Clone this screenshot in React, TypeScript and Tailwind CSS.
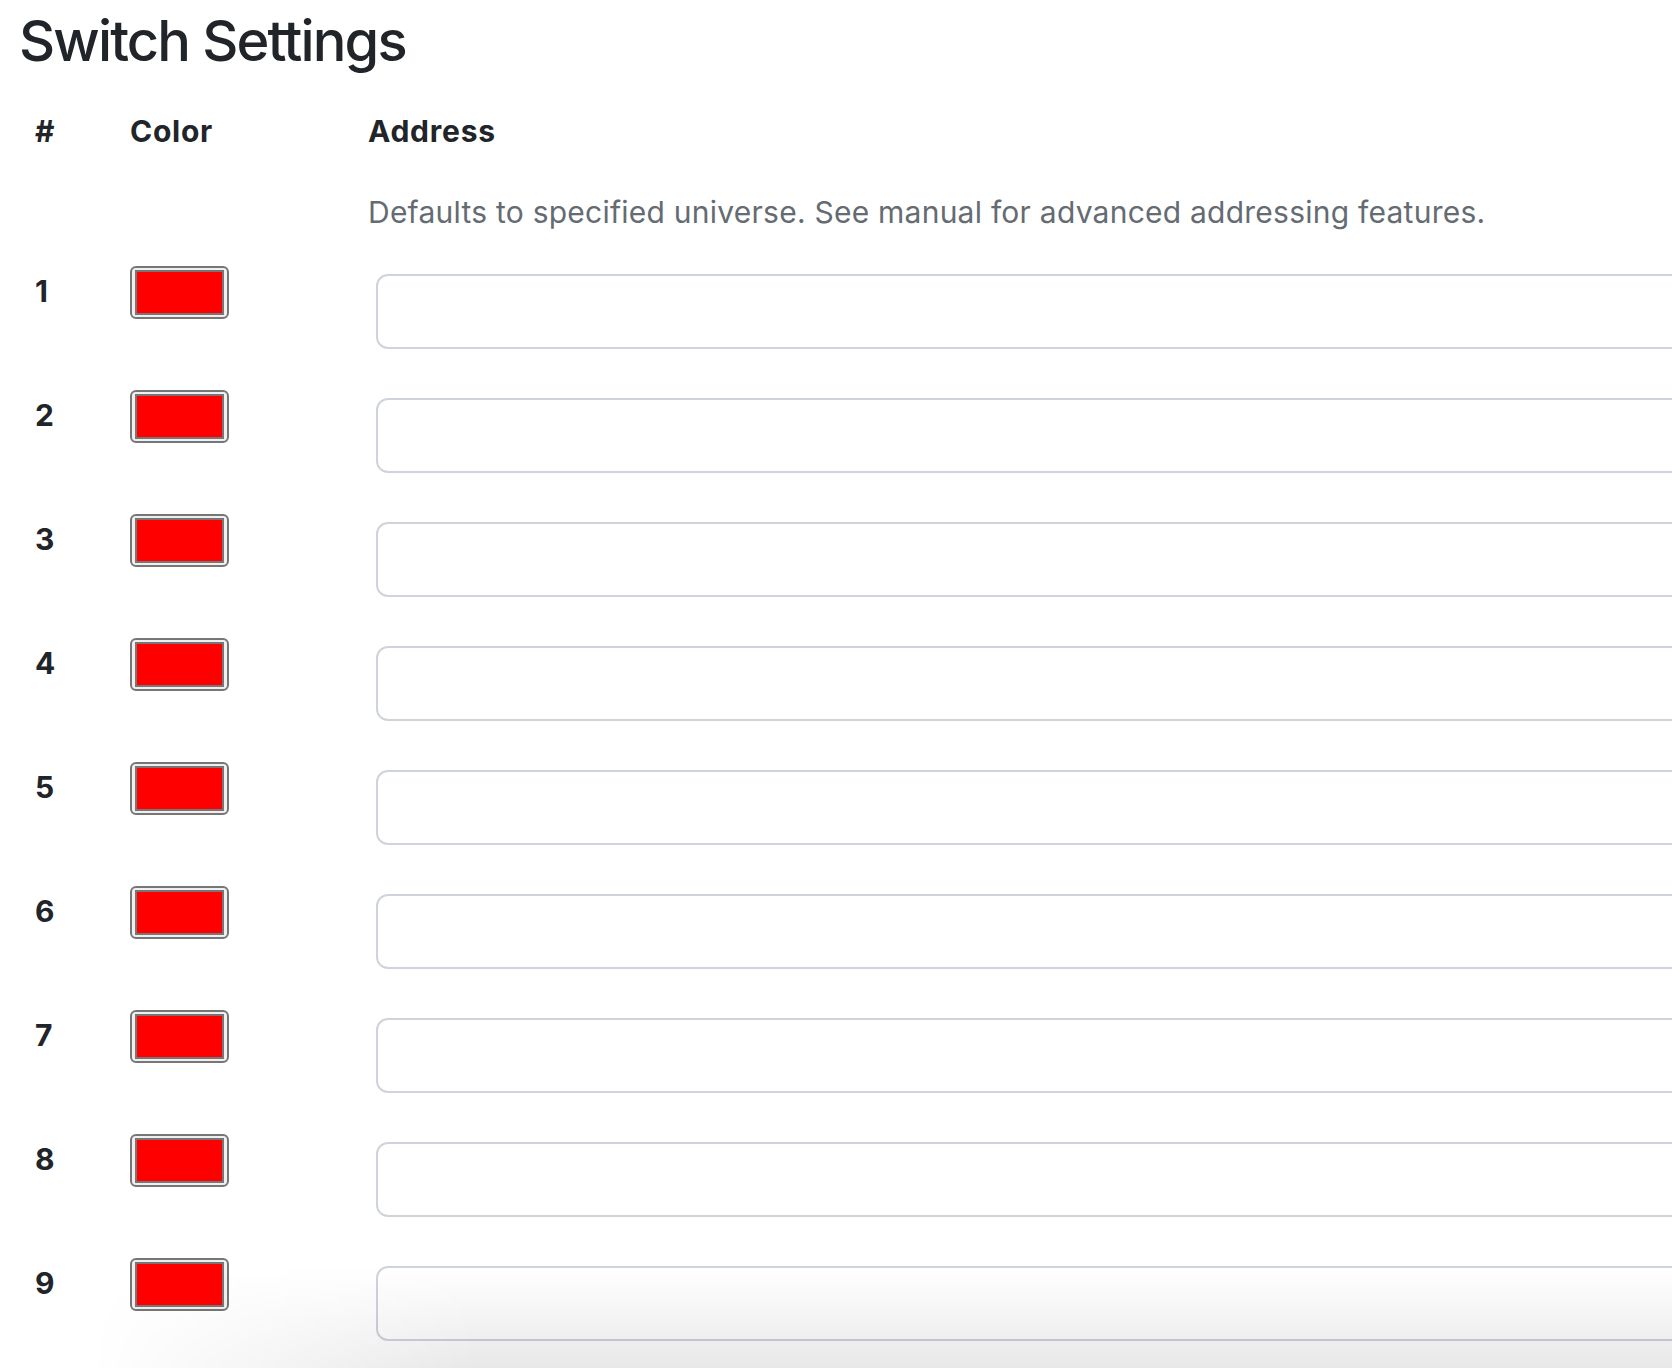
import React from 'react';

const switches = [1, 2, 3, 4, 5, 6, 7, 8, 9];

const ColorSwatch = () => (
  <div className="h-[53px] w-[99px] rounded-[6px] border-2 border-[#767676] bg-[#efefef] px-[3px] py-[2px]">
    <div className="h-full w-full border-2 border-[#767676] bg-[#ff0000]" />
  </div>
);

const App = () => {
  return (
    <div className="relative h-[1368px] w-full overflow-hidden bg-white font-['Inter','Liberation_Sans',sans-serif] text-[#212529]">
      <h2 className="pl-[19px] pt-[13px] text-[56px] leading-none font-medium tracking-[-0.033em]">
        Switch Settings
      </h2>

      <div className="mt-[47px] grid grid-cols-[95px_238px_1fr] pl-[35px] text-[30px] leading-none font-bold tracking-[0.025em]">
        <div>#</div>
        <div>Color</div>
        <div>Address</div>
      </div>

      <div className="mt-[51px] grid grid-cols-[95px_238px_1fr] pl-[35px]">
        <div />
        <div />
        <div className="text-[30px] leading-none tracking-[0.008em] whitespace-nowrap text-[#646b72]">
          Defaults to specified universe. See manual for advanced addressing features.
        </div>
      </div>

      <div className="mt-[39px] flex flex-col pl-[35px]">
        {switches.map(n => (
          <div
            key={n}
            className="grid h-[124px] grid-cols-[95px_246px_1fr] items-start"
          >
            <div className="mt-[10px] text-[30px] leading-none font-bold">{n}</div>
            <ColorSwatch />
            <input
              type="text"
              className="mt-[8px] h-[75px] w-[1400px] rounded-[12px] border-2 border-[#ced4da] bg-white px-6 text-[30px] outline-none"
            />
          </div>
        ))}
      </div>

      {/* window shadow at the bottom of the page */}
      <div className="pointer-events-none absolute right-0 bottom-0 left-0 h-[100px] bg-[linear-gradient(to_bottom,rgba(0,0,0,0),rgba(0,0,0,0.09))] [mask-image:linear-gradient(to_right,transparent_90px,black_480px)]" />
    </div>
  );
};

export default App;
